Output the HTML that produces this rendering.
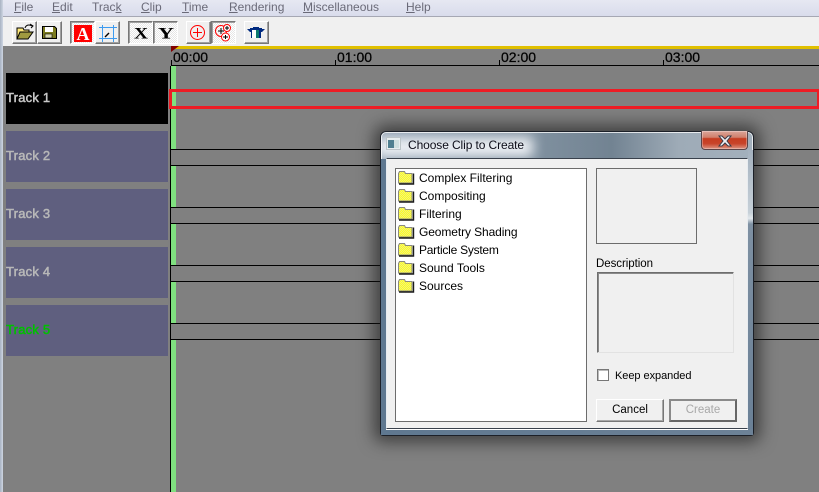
<!DOCTYPE html>
<html><head><meta charset="utf-8">
<style>
html,body{margin:0;padding:0}
body{width:819px;height:492px;overflow:hidden;position:relative;background:#808080;font-family:"Liberation Sans",sans-serif;font-size:12px;color:#000}
div{position:absolute;box-sizing:border-box}
svg{position:absolute;overflow:visible}
.m{top:0;font-size:12px;color:#6a6a78;white-space:nowrap;line-height:15px}
.m u{text-decoration:underline}
.b{background:#f0f0f0;width:25px;height:23px;top:21px;border:1px solid;border-color:#fff #777 #777 #fff;box-shadow:inset -1px -1px 0 #a0a0a0}
.p{background:repeating-conic-gradient(#fff 0 25%,#e6e6e6 0 50%) 0 0/2px 2px;border-color:#777 #fff #fff #777;box-shadow:inset 1px 1px 0 #a0a0a0}
.th{left:6px;width:162px;height:51px;background:#5f5f7f;color:#b8b8b8;font-size:13px;line-height:50px;white-space:nowrap;letter-spacing:.2px;-webkit-text-stroke:.5px currentColor}
.tr{left:170px;width:649px;height:17px;background:#808080;border:1px solid #000;border-right:0}
.tick{width:1px;height:5px;top:60px;background:#000}
.tl{top:50px;font-size:14px;line-height:15px;color:#000;white-space:nowrap;-webkit-text-stroke:.25px #000}
.ft{left:419px;color:#000;line-height:18px;white-space:nowrap}
</style></head><body>
<div style="left:0;top:0;width:819px;height:16px;background:linear-gradient(#e6e8f2,#d9dcec)"></div>
<div style="left:0;top:16px;width:819px;height:1px;background:#a6a8b4"></div>
<div style="left:0;top:17px;width:819px;height:29px;background:#f0f0f0"></div>
<div style="left:0;top:0;width:3px;height:492px;background:linear-gradient(90deg,#a7b2c2,#cfd6e2)"></div>
<div class="m" style="left:14px"><u>F</u>ile</div>
<div class="m" style="left:52px"><u>E</u>dit</div>
<div class="m" style="left:92px">Trac<u>k</u></div>
<div class="m" style="left:141px"><u>C</u>lip</div>
<div class="m" style="left:182px"><u>T</u>ime</div>
<div class="m" style="left:229px"><u>R</u>endering</div>
<div class="m" style="left:303px"><u>M</u>iscellaneous</div>
<div class="m" style="left:406px"><u>H</u>elp</div>

<div class="b" style="left:12px"></div>
<div class="b" style="left:37px"></div>
<div class="b p" style="left:70px"></div>
<div class="b" style="left:95px"></div>
<div class="b p" style="left:128px"></div>
<div class="b p" style="left:153px"></div>
<div class="b" style="left:186px"></div>
<div class="b p" style="left:211px"></div>
<div class="b" style="left:244px"></div>

<svg style="left:0;top:0" width="290" height="46" viewBox="0 0 290 46">
<!-- open -->
<path d="M17 28h6l1 2h5v2l-2 7H17z" fill="#ffe97a" stroke="#000"/>
<path d="M17 39l3-7h13l-5 7z" fill="#a09a40" stroke="#000"/>
<path d="M25 28c1-3 4-4 7-2" fill="none" stroke="#000"/><path d="M30 24l3 2-2 2" fill="none" stroke="#000"/>
<!-- save -->
<path d="M42.500 26.500h12l2 2v10h-14z" fill="#7c7c20" stroke="#000"/>
<rect x="45" y="27" width="8" height="5" fill="#fff"/><rect x="45" y="34" width="7" height="4" fill="#d8d8b0" stroke="#000" stroke-width=".6"/>
<!-- A -->
<rect x="74" y="25" width="18" height="17" fill="#ff0000"/>
<text x="83" y="40" text-anchor="middle" font-family="Liberation Serif" font-weight="bold" font-size="18" fill="#fff">A</text>
<!-- crop -->
<path d="M99 27.500h18M99 38.500h18M102.500 25v17M113.500 25v17" stroke="#3d9bf0" stroke-width="1" fill="none"/>
<path d="M105 37l4-4" stroke="#000" stroke-width="1.400"/>
<!-- X Y -->
<text x="134" y="38.500" textLength="14" lengthAdjust="spacingAndGlyphs" font-family="Liberation Serif" font-weight="bold" font-size="16">X</text>
<text x="158" y="38.500" textLength="16" lengthAdjust="spacingAndGlyphs" font-family="Liberation Serif" font-weight="bold" font-size="16">Y</text>
<!-- add -->
<circle cx="197.500" cy="32.500" r="7" fill="none" stroke="#f00"/><path d="M193 32.500h9M197.500 28v9" stroke="#f00"/>
<!-- circles -->
<circle cx="221" cy="31" r="5.500" fill="none" stroke="#f00"/><circle cx="227" cy="28" r="3.500" fill="#fff" stroke="#f00"/><circle cx="225.500" cy="37" r="4" fill="#fff" stroke="#f00"/>
<path d="M218 31h6M221 28v6M225 28h4M227 26v4M223 37h5M225.500 35v4" stroke="#000"/>
<!-- pot -->
<path d="M253 27.500h6" stroke="#002a80"/>
<path d="M247 29h4l1 3h-2zM265 29h-4l-1 3h2z" fill="#002a80"/>
<rect x="250" y="28" width="12" height="2" fill="#002a80"/>
<rect x="251" y="30" width="10" height="8" fill="#fff"/>
<rect x="251" y="30" width="1" height="8" fill="#002a80"/>
<rect x="256" y="30" width="3" height="8" fill="#0d7a70"/>
<rect x="259" y="30" width="2" height="8" fill="#002a80"/>
</svg>

<!-- timeline -->
<div style="left:171px;top:46px;width:648px;height:3px;background:#e0c000"></div>
<svg style="left:0;top:0" width="200" height="60"><path d="M171 46h8l-8 6z" fill="#800000"/></svg>
<div style="left:171px;top:65px;width:648px;height:1px;background:#000"></div>
<div class="tick" style="left:171px"></div><div class="tick" style="left:335px"></div><div class="tick" style="left:499px"></div><div class="tick" style="left:663px"></div>
<div class="tl" style="left:173px">00:00</div><div class="tl" style="left:337px">01:00</div><div class="tl" style="left:501px">02:00</div><div class="tl" style="left:665px">03:00</div>

<div style="left:170px;top:66px;width:1px;height:426px;background:#000"></div>
<div style="left:171px;top:66px;width:5px;height:426px;background:#80e080"></div>

<div class="th" style="top:73px;background:#000;color:#c8c8c8">Track 1</div>
<div class="th" style="top:131px">Track 2</div>
<div class="th" style="top:189px">Track 3</div>
<div class="th" style="top:247px">Track 4</div>
<div class="th" style="top:305px;color:#00c000">Track 5</div>

<div class="tr" style="top:149px"></div><div class="tr" style="top:207px"></div><div class="tr" style="top:265px"></div><div class="tr" style="top:323px"></div>
<div style="left:169px;top:89px;width:650px;height:20px;border:3px solid #ee1c25;border-right-width:2px"></div>

<!-- dialog -->
<div style="left:380px;top:131px;width:374px;height:305px;border-radius:6px 6px 3px 3px;border:1px solid #1c2028;box-shadow:0 0 16px 6px rgba(25,25,25,.62);background:linear-gradient(90deg,#8b9cae 0,#7f909f 42%,#728392 62%,#9eabb7 80%,#a3b0bc 100%);overflow:hidden">
<div style="left:-6px;top:5px;width:158px;height:20px;background:#eef1f5;filter:blur(6px)"></div>
<div style="left:0;top:0;right:0;bottom:0;border:1px solid rgba(255,255,255,.75);border-radius:5px 5px 2px 2px"></div>
</div>
<div style="left:381px;top:159px;width:372px;height:276px;background:linear-gradient(90deg,#5f7890 0 6px,transparent 6px)"></div>
<div style="left:748px;top:150px;width:5px;height:285px;background:linear-gradient(#a5b2bf 0,#c6d0d8 22%,#e2e8ec 24%,#7e90a2 26%,#6a8096 100%)"></div>
<div style="left:381px;top:429px;width:372px;height:6px;background:linear-gradient(90deg,#5f7890,#6d8297)"></div>
<div style="left:386px;top:158px;width:362px;height:271px;background:#f0f0f0;border:1px solid #39414c;border-color:#39414c #e8ecf0 #39414c #e8ecf0;box-shadow:0 1px 0 #fff"></div>

<svg style="left:386px;top:137px" width="16" height="14"><rect x=".5" y=".5" width="14" height="12" fill="#e8eef0" stroke="#bcc4c8"/><rect x="2" y="3" width="6" height="8" fill="#4f7f90"/><rect x="8" y="3" width="5" height="8" fill="#cfe0e0"/></svg>
<div style="left:408px;top:137px;font-size:12px;line-height:16px;white-space:nowrap;color:#0c0c18;letter-spacing:-.1px">Choose Clip to Create</div>
<div style="left:701px;top:131px;width:47px;height:19px;border:1px solid #5a4448;border-top:0;border-radius:0 0 4px 4px;background:linear-gradient(#dca69a 0,#d0806c 35%,#c63c20 42%,#c8442a 70%,#dc9482 100%);box-shadow:inset 0 0 0 1px rgba(255,255,255,.3)"></div>
<svg style="left:715px;top:134px" width="20" height="14"><path d="M4 2l3 0 3 3 3-3 3 0-4 5 4 5-3 0-3-3-3 3-3 0 4-5z" fill="#eef0f4" stroke="#3c3c48" stroke-width="1"/></svg>

<div style="left:395px;top:168px;width:192px;height:254px;background:#fff;border:1px solid #6c6c6c"></div>
<svg style="left:0;top:0" width="420" height="300">
<defs><pattern id="y" width="2" height="2" patternUnits="userSpaceOnUse"><rect width="2" height="2" fill="#ffff20"/><rect width="1" height="1" fill="#eeee80"/><rect x="1" y="1" width="1" height="1" fill="#eeee80"/></pattern>
<g id="fd"><path d="M398.500 173.500l1-2h5l1 2h6.500v9.500h-13.500z" fill="url(#y)" stroke="#8a8a80"/><path d="M399 184h14.500v-10.500" fill="none" stroke="#1a1a1a" stroke-width="1.400"/></g></defs>
<use href="#fd"/><use href="#fd" y="18"/><use href="#fd" y="36"/><use href="#fd" y="54"/><use href="#fd" y="72"/><use href="#fd" y="90"/><use href="#fd" y="108"/>
</svg>
<div class="ft" style="top:169px">Complex Filtering</div>
<div class="ft" style="top:187px">Compositing</div>
<div class="ft" style="top:205px">Filtering</div>
<div class="ft" style="top:223px;letter-spacing:-.1px">Geometry Shading</div>
<div class="ft" style="top:241px;letter-spacing:-.25px">Particle System</div>
<div class="ft" style="top:259px">Sound Tools</div>
<div class="ft" style="top:277px">Sources</div>

<div style="left:596px;top:168px;width:101px;height:76px;border:1px solid #6c6c6c"></div>
<div style="left:596px;top:257px;line-height:14px;white-space:nowrap;font-size:11.500px;letter-spacing:-.05px">Description</div>
<div style="left:597px;top:272px;width:137px;height:81px;border:1px solid;border-color:#6e6e6e #e2e2e2 #e2e2e2 #6e6e6e;box-shadow:inset 1px 1px 0 #8a8a8a"></div>
<div style="left:597px;top:369px;width:12px;height:12px;background:#fff;border:1px solid #777;box-shadow:inset 1px 1px 0 #bbb"></div>
<div style="left:615px;top:369px;line-height:14px;white-space:nowrap;font-size:11px;letter-spacing:-.05px">Keep expanded</div>

<div style="left:596px;top:399px;width:68px;height:23px;background:#f0f0f0;border:1px solid;border-color:#fff #777 #777 #fff;box-shadow:inset -1px -1px 0 #a8a8a8;text-align:center;line-height:21px;font-size:11.500px">Cancel</div>
<div style="left:669px;top:399px;width:68px;height:23px;background:#f0f0f0;border:2px solid;border-color:#8a8a8a #666 #666 #8a8a8a;text-align:center;line-height:19px;font-size:11.500px;color:#a8a8a8">Create</div>
</body></html>
